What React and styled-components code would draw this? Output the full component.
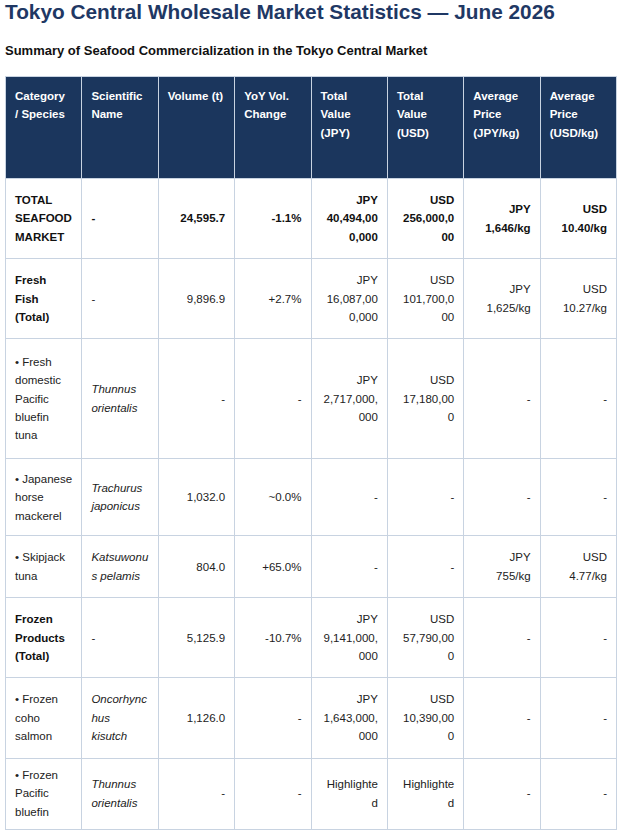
import React from 'react';
import styled, { createGlobalStyle } from 'styled-components';

const GlobalStyle = createGlobalStyle`
  body {
    margin: 0;
    background: #fff;
    font-family: "Liberation Sans", Arial, sans-serif;
    color: #222;
  }
`;

const Page = styled.div`
  padding: 0 5px;
`;

const Title = styled.h1`
  margin: 0 0 19px;
  font-size: 20.8px;
  font-weight: bold;
  color: #1f3864;
`;

const Subtitle = styled.h2`
  margin: 0 0 18px;
  font-size: 13px;
  font-weight: bold;
  color: #111;
`;

const Table = styled.table`
  width: 100%;
  table-layout: fixed;
  border-collapse: collapse;
  border: 1px solid #c8d3e1;
  font-size: 11.5px;
  line-height: 1.6;
`;

const HeadRow = styled.tr`
  height: 102px;
  background: #1b365d;
`;

const HeadCell = styled.th`
  padding: 10px 12px 10px 9px;
  border: 1px solid #c8d3e1;
  color: #fff;
  font-weight: bold;
  text-align: left;
  vertical-align: top;
`;

const Row = styled.tr`
  & > td {
    padding-top: ${({ $padY }) => $padY}px;
    padding-bottom: ${({ $padY }) => $padY}px;
  }
`;

const Cell = styled.td`
  padding: 12px 9px;
  border: 1px solid #c8d3e1;
  vertical-align: middle;
  text-align: ${({ $align }) => $align || 'right'};
  font-weight: ${({ $bold }) => ($bold ? 'bold' : 'normal')};
  font-style: ${({ $italic }) => ($italic ? 'italic' : 'normal')};
  color: ${({ $bold }) => ($bold ? '#111' : '#222')};
  word-break: break-word;
`;

const headers = [
  'Category / Species',
  'Scientific Name',
  'Volume\u00a0(t)',
  'YoY Vol. Change',
  'Total Value (JPY)',
  'Total Value (USD)',
  'Average Price (JPY/kg)',
  'Average Price (USD/kg)',
];

const rows = [
  {
    name: 'TOTAL SEAFOOD MARKET', sci: '-', vol: '24,595.7', yoy: '-1.1%',
    jpy: 'JPY 40,494,000,000', usd: 'USD 256,000,000', pj: 'JPY 1,646/kg', pu: 'USD 10.40/kg',
    total: true,
  },
  {
    name: 'Fresh Fish (Total)', sci: '-', vol: '9,896.9', yoy: '+2.7%',
    jpy: 'JPY 16,087,000,000', usd: 'USD 101,700,000', pj: 'JPY 1,625/kg', pu: 'USD 10.27/kg',
    group: true,
  },
  {
    name: '• Fresh domestic Pacific bluefin tuna', sci: 'Thunnus orientalis', vol: '-', yoy: '-',
    jpy: 'JPY 2,717,000,000', usd: 'USD 17,180,000', pj: '-', pu: '-',
    padY: 13.5,
  },
  {
    name: '• Japanese horse mackerel', sci: 'Trachurus japonicus', vol: '1,032.0', yoy: '~0.0%',
    jpy: '-', usd: '-', pj: '-', pu: '-',
    padY: 10.5,
  },
  {
    name: '• Skipjack tuna', sci: 'Katsuwonus pelamis', vol: '804.0', yoy: '+65.0%',
    jpy: '-', usd: '-', pj: 'JPY 755/kg', pu: 'USD 4.77/kg',
  },
  {
    name: 'Frozen Products (Total)', sci: '-', vol: '5,125.9', yoy: '-10.7%',
    jpy: 'JPY 9,141,000,000', usd: 'USD 57,790,000', pj: '-', pu: '-',
    group: true,
  },
  {
    name: '• Frozen coho salmon', sci: 'Oncorhynchus kisutch', vol: '1,126.0', yoy: '-',
    jpy: 'JPY 1,643,000,000', usd: 'USD 10,390,000', pj: '-', pu: '-',
  },
  {
    name: '• Frozen Pacific bluefin', sci: 'Thunnus orientalis', vol: '-', yoy: '-',
    jpy: 'Highlighted', usd: 'Highlighted', pj: '-', pu: '-',
    padY: 7.5,
  },
];

export default function App() {
  return (
    <Page>
      <GlobalStyle />
      <Title>Tokyo Central Wholesale Market Statistics — June 2026</Title>
      <Subtitle>Summary of Seafood Commercialization in the Tokyo Central Market</Subtitle>
      <Table>
        <thead>
          <HeadRow>
            {headers.map((h) => (
              <HeadCell key={h}>{h}</HeadCell>
            ))}
          </HeadRow>
        </thead>
        <tbody>
          {rows.map((r) => {
            const species = !r.total && !r.group;
            return (
              <Row key={r.name} $padY={r.padY || 12}>
                <Cell $align="left" $bold={r.total || r.group}>{r.name}</Cell>
                <Cell $align="left" $italic={species} $bold={r.total}>{r.sci}</Cell>
                <Cell $bold={r.total}>{r.vol}</Cell>
                <Cell $bold={r.total}>{r.yoy}</Cell>
                <Cell $bold={r.total}>{r.jpy}</Cell>
                <Cell $bold={r.total}>{r.usd}</Cell>
                <Cell $bold={r.total}>{r.pj}</Cell>
                <Cell $bold={r.total}>{r.pu}</Cell>
              </Row>
            );
          })}
        </tbody>
      </Table>
    </Page>
  );
}
